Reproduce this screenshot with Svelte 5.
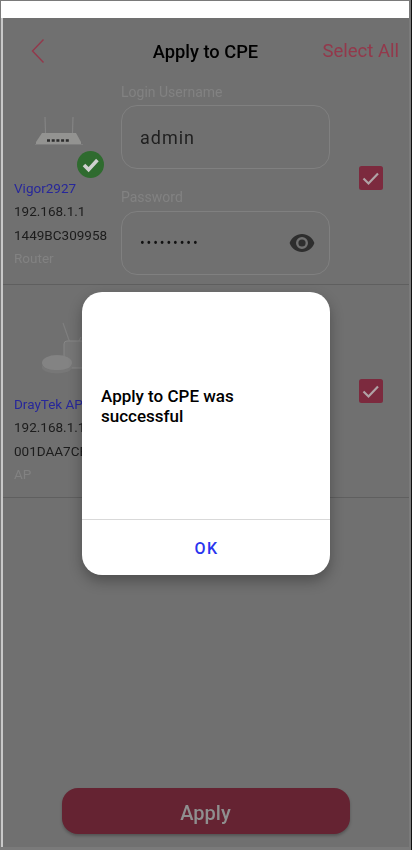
<script>
  const devices = [
    { name: 'Vigor2927', ip: '192.168.1.1', mac: '1449BC309958', kind: 'Router', ok: true },
    { name: 'DrayTek AP', ip: '192.168.1.1', mac: '001DAA7CE', kind: 'AP', ok: false }
  ];
</script>

<div class="frame">
  <div class="statusbar"></div>
  <div class="screen">
    <header class="header">
      <svg class="back" width="14" height="26" viewBox="0 0 14 26" fill="none"><path d="M12.5 1.5 1.5 13l11 11.5" stroke="#93384b" stroke-width="1.4"/></svg>
      <h1>Apply to CPE</h1>
      <span class="all">Select All</span>
    </header>

    {#each devices as d}
      <section class="row" class:second={!d.ok}>
        <div class="info">
          <div class="pic">
            {#if d.ok}
              <svg width="54" height="36" viewBox="0 0 54 36">
                <path d="M12 3 12.500 19M40 3 39.500 19" stroke="#858585" stroke-width="1.100"/>
                <path d="M9 19H43L48 28V30H3V28Z" fill="#939391"/>
                <path d="M2 30.500H50" stroke="#7e7e7e" stroke-width="1"/>
                <path d="M14 26.500H36" stroke="#2b2b2b" stroke-width="2.600" stroke-dasharray="3 1.700"/>
              </svg>
              <svg class="badge" width="27" height="27" viewBox="0 0 27 27">
                <circle cx="13.500" cy="13.500" r="13.500" fill="#2f6b2f"/>
                <path d="M7 14l4.600 4.600L20.400 9" fill="none" stroke="#d0d0d0" stroke-width="3.600"/>
              </svg>
            {:else}
              <svg width="62" height="56" viewBox="0 0 62 56">
                <path d="M23 2 30 22M38 22l3-6" stroke="#7f7f7f" stroke-width="1.200"/>
                <rect x="24" y="20" width="30" height="27" rx="3" fill="#767676" stroke="#868686"/>
                <ellipse cx="17" cy="42" rx="15" ry="8" fill="#838383"/>
                <path d="M2 43c1 8 29 8 30 0v4c-2 7-28 7-30 0z" fill="#777"/>
              </svg>
            {/if}
          </div>
          <div class="name">{d.name}</div>
          <div>{d.ip}</div>
          <div>{d.mac}</div>
          <div class="kind">{d.kind}</div>
        </div>

        <div class="fields">
          {#if d.ok}
            <label for="user">Login Username</label>
            <div class="input" id="user">admin</div>
            <label for="pass">Password</label>
            <div class="input pass" id="pass">
              <span class="dots">•••••••••</span>
              <svg width="26" height="18" viewBox="0 0 26 18">
                <path fill-rule="evenodd" fill="#2e2e2e" d="M13 0C7.300 0 2.600 3.600.6 9c2 5.400 6.700 9 12.400 9s10.400-3.600 12.400-9C23.400 3.600 18.700 0 13 0Zm0 15a6 6 0 1 1 0-12 6 6 0 0 1 0 12Zm0-9.600a3.600 3.600 0 1 0 0 7.200 3.600 3.600 0 0 0 0-7.200Z"/>
              </svg>
            </div>
          {/if}
        </div>

        <div class="check">
          <svg width="24" height="24" viewBox="0 0 24 24">
            <rect width="24" height="24" rx="2.500" fill="#7c2a3e"/>
            <path d="M4.500 12.500l5 5L19 7.500" fill="none" stroke="#b0a3a6" stroke-width="2.200"/>
          </svg>
        </div>
      </section>
    {/each}

    <div class="spacer"></div>
    <div class="foot"><button>Apply</button></div>
  </div>

  <div class="dialog">
    <p>Apply to CPE was successful</p>
    <div class="ok">OK</div>
  </div>
</div>

<style>
  :global(body) { margin: 0; background: #808080; }
  .frame {
    position: relative;
    box-sizing: border-box;
    width: 412px;
    height: 850px;
    padding: 1px 2px 3px 1px;
    display: flex;
    flex-direction: column;
    background: #7a7a7a;
    border-right: 1px solid #111;
    font-family: Roboto, sans-serif;
    color: #1c1c1c;
    overflow: hidden;
  }
  .statusbar { height: 17px; background: #fff; flex: none; }
  .screen {
    flex: 1;
    display: flex;
    flex-direction: column;
    background: #707070;
    border-left: 2px solid #c8c8c8;
    filter: blur(0.4px);
    min-height: 0;
  }
  .header {
    display: flex;
    align-items: center;
    justify-content: space-between;
    height: 66px;
    flex: none;
    padding: 0 10px 0 28px;
    position: relative;
  }
  .back { margin-top: -1px; }
  h1 {
    position: absolute;
    left: 0;
    right: 1px;
    margin: 0;
    text-align: center;
    font-size: 18.300px;
    font-weight: 500;
    color: #000;
  }
  .all { font-size: 18.500px; color: #93384b; }
  .row {
    display: flex;
    height: 200px;
    align-items: flex-start;
    border-bottom: 1px solid #5f5f5f;
    flex: none;
  }
  .row.second { height: 212px; }
  .info {
    width: 118px;
    flex: none;
    padding-left: 11px;
    box-sizing: border-box;
    font-size: 13.500px;
    line-height: 23.300px;
    white-space: nowrap;
    margin-top: 27px;
  }
  .second .info { margin-top: 30px; }
  .pic { position: relative; height: 66px; padding: 3px 0 0 19px; box-sizing: border-box; }
  .second .pic { height: 78px; padding: 6px 0 0; margin-left: 26px; }
  .badge { position: absolute; left: 63px; top: 40px; }
  .name { color: #27279a; }
  .kind { color: #828282; }
  .fields { width: 209px; flex: none; display: flex; flex-direction: column; }
  label { font-size: 14px; line-height: 20px; color: #828282; margin-top: -2px; padding-bottom: 1px; }
  .input {
    box-sizing: border-box;
    height: 64px;
    margin-top: 2px;
    margin-bottom: 20px;
    border: 1px solid #808080;
    border-radius: 16px;
    padding: 0 18px;
    display: flex;
    align-items: center;
    justify-content: space-between;
    font-size: 18px;
    letter-spacing: 1px;
    color: #1f1f1f;
  }
  .input.pass { margin-top: 3px; margin-bottom: 0; }
  .dots { font-size: 14px; letter-spacing: 1.900px; color: #111; }
  .pass svg { margin-right: -4px; }
  .check { margin-left: 29px; margin-top: 82px; line-height: 0; }
  .second .check { margin-top: 94px; }
  .spacer { flex: 1; }
  .foot { display: flex; justify-content: center; padding-bottom: 13px; padding-right: 1px; }
  button {
    width: 288px;
    height: 46px;
    padding: 3px 0 0;
    border: 0;
    border-radius: 16px;
    background: #652332;
    box-shadow: 0 2px 3px rgba(0,0,0,.25);
    color: #8f8f8f;
    font: 500 20px Roboto, sans-serif;
  }
  .dialog {
    position: absolute;
    left: 82px;
    top: 292px;
    width: 248px;
    height: 283px;
    box-sizing: border-box;
    background: #fff;
    border-radius: 20px;
    box-shadow: 0 6px 14px rgba(0,0,0,.3);
    display: flex;
    flex-direction: column;
  }
  .dialog p {
    flex: 1;
    margin: 0;
    padding: 0 19px;
    display: flex;
    align-items: center;
    font-size: 17px;
    line-height: 20px;
    font-weight: 500;
    color: #000;
  }
  .ok {
    height: 55px;
    border-top: 1px solid #d9d9d9;
    text-align: center;
    line-height: 58px;
    padding-left: 1px;
    font-size: 16px;
    font-weight: 500;
    letter-spacing: 1.500px;
    color: #2a35ef;
  }
</style>
